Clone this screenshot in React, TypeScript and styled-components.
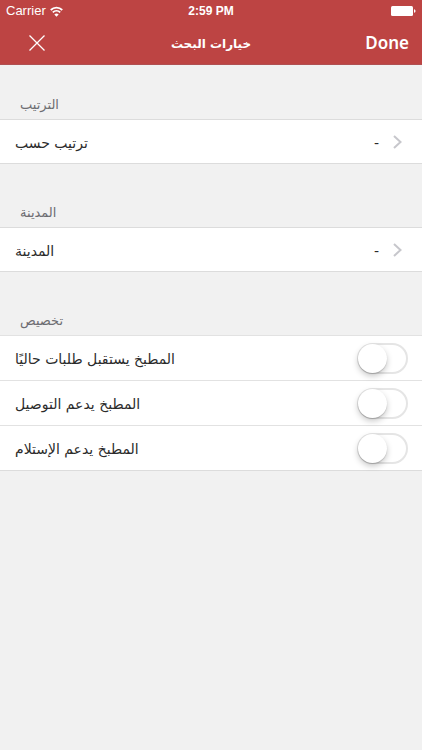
import React from "react";
import styled, { createGlobalStyle } from "styled-components";

const GlobalStyle = createGlobalStyle`
  * { box-sizing: border-box; }
  body {
    margin: 0;
    background: #f1f1f1;
    color: #2b2b2b;
    font-family: "DejaVu Sans", sans-serif;
  }
  button { font: inherit; color: inherit; background: none; border: 0; padding: 0; cursor: pointer; }
`;

const Page = styled.div`
  min-height: 100vh;
  background: #f1f1f1;
`;

const Header = styled.header`
  background: #bd4443;
  color: #fff;
  border-bottom: 1px solid #b05052;
`;

const StatusBar = styled.div`
  display: grid;
  grid-template-columns: 1fr auto 1fr;
  align-items: center;
  height: 22px;
  padding: 0 6px;
  font: 12px/22px "Liberation Sans", sans-serif;
`;

const Carrier = styled.div`
  display: flex;
  align-items: center;
  gap: 4px;
  font-size: 13px;
`;

const Clock = styled.strong`
  font-weight: 700;
`;

const Battery = styled.svg`
  justify-self: end;
`;

const NavBar = styled.div`
  display: grid;
  grid-template-columns: 1fr auto 1fr;
  align-items: center;
  height: 42px;
  padding: 0 13px;
`;

const Title = styled.h1`
  margin: 0;
  padding-top: 2px;
  font-size: 12px;
  line-height: 20px;
  font-weight: 700;
`;

const CloseButton = styled.button`
  && {
    display: flex;
    justify-self: start;
    padding: 0 16px;
  }
`;

const DoneButton = styled.button`
  justify-self: end;
  && {
    font: 600 17px/24px "Noto Sans", sans-serif;
  }
`;

const SectionTitle = styled.h2<{ $first?: boolean }>`
  margin: 0;
  padding: ${(p) => (p.$first ? "30px" : "39px")} 20px 4px;
  color: #6d6d72;
  font-size: 13px;
  line-height: 20px;
  font-weight: 400;
`;

const Group = styled.div`
  background: #fff;
  border-bottom: 1px solid #dcdcdc;
`;

const RowText = styled.bdi`
  padding-top: 2px;
  color: #2b2b2b;
  font-size: 14px;
  line-height: 20px;
`;

const LinkRow = styled.button`
  && {
    display: flex;
    align-items: center;
    gap: 14px;
    width: 100%;
    height: 44px;
    padding: 0 20px 0 15px;
    border-top: 1px solid #dcdcdc;
  }
`;

const Value = styled(RowText)`
  margin-left: auto;
`;

const SwitchRow = styled.label`
  display: flex;
  align-items: center;
  justify-content: space-between;
  height: 45px;
  padding: 0 14px 0 15px;
  border-top: 1px solid #e2e2e2;
`;

const Switch = styled.input`
  appearance: none;
  display: flex;
  align-items: center;
  width: 51px;
  height: 31px;
  margin: 0;
  border: 2px solid #e5e5e5;
  border-radius: 16px;
  background: #fff;

  &::before {
    content: "";
    flex: none;
    width: 29px;
    height: 29px;
    margin-left: -1px;
    border-radius: 50%;
    background: #fff;
    box-shadow: 0 3px 6px rgba(0, 0, 0, 0.22), 0 1px 1px rgba(0, 0, 0, 0.16);
  }
  &:checked { background: #4cd964; }
  &:checked::before { margin-left: 19px; }
`;

const Chevron = () => (
  <svg width="9" height="14" viewBox="0 0 9 14" fill="none" stroke="#c7c7cc" strokeWidth="2" aria-hidden="true">
    <path d="M1 1l6.5 6L1 13" />
  </svg>
);

const choices = [
  { section: "الترتيب", label: "ترتيب حسب" },
  { section: "المدينة", label: "المدينة" },
];

const toggles = ["المطبخ يستقبل طلبات حاليًا", "المطبخ يدعم التوصيل", "المطبخ يدعم الإستلام"];

export default function App() {
  return (
    <Page>
      <GlobalStyle />
      <Header>
        <StatusBar>
          <Carrier>
            Carrier
            <svg width="13" height="11" viewBox="0 0 12 10" fill="none" stroke="#fff" aria-hidden="true">
              <path d="M0.7 3.6a7.6 7.6 0 0 1 10.6 0" strokeWidth="1.7" />
              <path d="M2.6 5.8a4.9 4.9 0 0 1 6.8 0" strokeWidth="1.7" />
              <path d="M6 9.8L4 7.7a2.9 2.9 0 0 1 4 0z" fill="#fff" stroke="none" />
            </svg>
          </Carrier>
          <Clock>2:59 PM</Clock>
          <Battery width="25" height="10" viewBox="0 0 25 10" fill="#fff" aria-hidden="true">
            <rect width="22" height="10" rx="1.5" />
            <path d="M23 3.2c2 .5 2 3.1 0 3.6z" />
          </Battery>
        </StatusBar>
        <NavBar>
          <CloseButton aria-label="إغلاق">
            <svg width="16" height="16" viewBox="0 0 16 16" stroke="#fff" strokeWidth="1.3" aria-hidden="true">
              <path d="M0.5 0.5l15 15M15.5 0.5l-15 15" />
            </svg>
          </CloseButton>
          <Title><bdi lang="ar">خيارات البحث</bdi></Title>
          <DoneButton>Done</DoneButton>
        </NavBar>
      </Header>
      <main>
        {choices.map((c, i) => (
          <section key={c.section}>
            <SectionTitle $first={i === 0}><bdi lang="ar">{c.section}</bdi></SectionTitle>
            <Group>
              <LinkRow>
                <RowText lang="ar">{c.label}</RowText>
                <Value>-</Value>
                <Chevron />
              </LinkRow>
            </Group>
          </section>
        ))}
        <section>
          <SectionTitle><bdi lang="ar">تخصيص</bdi></SectionTitle>
          <Group>
            {toggles.map((t) => (
              <SwitchRow key={t}>
                <RowText lang="ar">{t}</RowText>
                <Switch type="checkbox" role="switch" />
              </SwitchRow>
            ))}
          </Group>
        </section>
      </main>
    </Page>
  );
}
